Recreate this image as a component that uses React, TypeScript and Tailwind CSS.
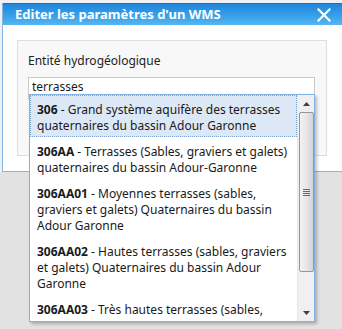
import React from "react";

const items: { code: string; lines: string[] }[] = [
  {
    code: "306",
    lines: [" - Grand système aquifère des terrasses", "quaternaires du bassin Adour Garonne"],
  },
  {
    code: "306AA",
    lines: [" - Terrasses (Sables, graviers et galets)", "quaternaires du bassin Adour-Garonne"],
  },
  {
    code: "306AA01",
    lines: [" - Moyennes terrasses (sables,", "graviers et galets) Quaternaires du bassin", "Adour Garonne"],
  },
  {
    code: "306AA02",
    lines: [" - Hautes terrasses (sables, graviers", "et galets) Quaternaires du bassin Adour", "Garonne"],
  },
  {
    code: "306AA03",
    lines: [" - Très hautes terrasses (sables,"],
  },
];

function Scrollbar() {
  return (
    <div className="w-[17px] h-full bg-[#f0f0f0] flex flex-col items-center border-l border-[#e8e8e8]">
      {/* up arrow */}
      <div className="h-[17px] w-full flex items-center justify-center">
        <svg width="7" height="4" viewBox="0 0 7 4">
          <path d="M0 4 L3.5 0 L7 4 Z" fill="#404040" />
        </svg>
      </div>
      {/* thumb */}
      <div className="w-[15px] h-[160px] rounded-[2px] border border-[#979797] bg-[linear-gradient(to_right,#f3f3f3,#e6e6e6_50%,#d3d3d3)] flex items-center justify-center">
        <div className="flex flex-col gap-[1px]">
          <div className="w-[7px] h-[1px] bg-[#6a6a6a]" />
          <div className="w-[7px] h-[1px] bg-[#6a6a6a]" />
          <div className="w-[7px] h-[1px] bg-[#6a6a6a]" />
          <div className="w-[7px] h-[1px] bg-[#6a6a6a]" />
        </div>
      </div>
      <div className="flex-1" />
      {/* down arrow */}
      <div className="h-[17px] w-full flex items-center justify-center">
        <svg width="7" height="4" viewBox="0 0 7 4">
          <path d="M0 0 L7 0 L3.5 4 Z" fill="#404040" />
        </svg>
      </div>
    </div>
  );
}

export default function App() {
  return (
    <div className="relative w-[342px] h-[329px] overflow-hidden bg-[#e2e2e2] font-['Noto_Sans',sans-serif] text-[12px] text-[#1a1a1a]">
      {/* Dialog */}
      <div className="h-[172px] bg-[#eef0f3] pl-[2px] pt-[3px]">
        <div className="h-full border-l border-b border-[#86b5e1] bg-white flex flex-col">
          <div className="h-[22px] flex items-center justify-between border-t border-[#1a6fc0] bg-[linear-gradient(to_bottom,#1f86dc,#3aa2ea_60%,#55b6f0)] pl-[12px] pr-[11px]">
            <span className="text-white font-bold text-[13px] leading-none">
              Editer les paramètres d'un WMS
            </span>
            <svg width="14" height="14" viewBox="0 0 14 14">
              <path d="M1.5 1.5 L12.5 12.5 M12.5 1.5 L1.5 12.5" stroke="white" strokeWidth="2.2" strokeLinecap="square" />
            </svg>
          </div>
          <div className="pl-[14px] pt-[15px]">
            <div className="w-[310px] h-[116px] border border-[#dedede] bg-[#f8f8f8] pl-[10px] pt-[12px]">
              <div className="leading-[16px] text-[#222]">Entité hydrogéologique</div>
              <div className="mt-[8px] w-[287px] h-[22px] border border-[#c9c9c9] bg-white pl-[3px] leading-[18px]">
                terrasses
              </div>
            </div>
          </div>
        </div>
      </div>

      {/* Autocomplete list */}
      <div className="absolute left-[29px] top-[94px] w-[286px] h-[228px] border border-[#7fb3e6] bg-white flex shadow-[2px_2px_3px_rgba(0,0,0,0.25)]">
        <div className="flex-1 overflow-hidden">
          {items.map((item, i) => (
            <div
              key={item.code}
              className={
                i === 0
                  ? "px-[6px] pt-[6px] pb-[2px] leading-[16px] whitespace-nowrap bg-[#dde8f6] border border-dotted border-[#7aa6d6]"
                  : "px-[6px] pt-[6px] pb-[2px] leading-[16px] whitespace-nowrap border border-transparent"
              }
            >
              {item.lines.map((line, j) => (
                <div key={j}>
                  {j === 0 && <span className="font-bold">{item.code}</span>}
                  {line}
                </div>
              ))}
            </div>
          ))}
        </div>
        <Scrollbar />
      </div>
    </div>
  );
}
